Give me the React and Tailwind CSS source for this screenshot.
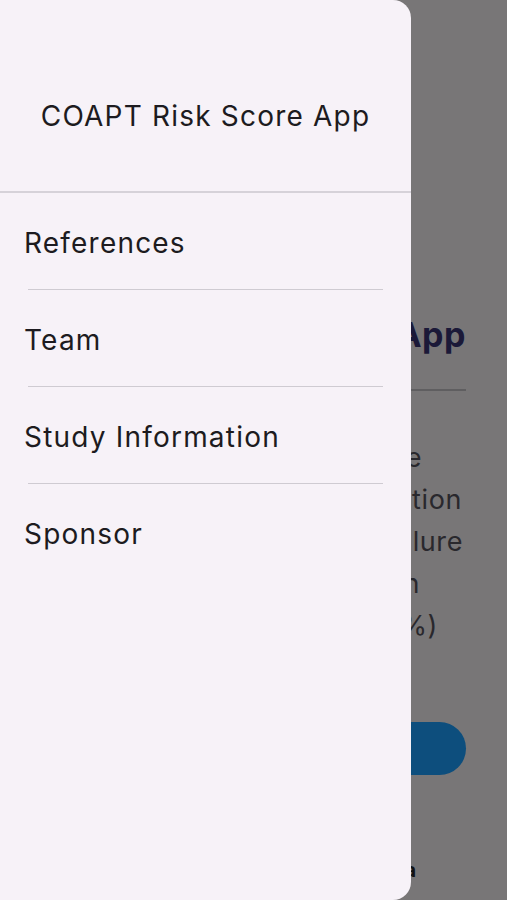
import React from 'react';

const menuItems = ['References', 'Team', 'Study Information', 'Sponsor'];

const bodyLines = [
  { text: 'Estimate the', mr: 'mr-[44px]' },
  { text: 'risk of the combination', mr: 'mr-[4px]' },
  { text: 'of death or heart failure', mr: 'mr-[3px]' },
  { text: 'hospitalization', mr: 'mr-[46px]' },
  { text: 'at 2 years (%)', mr: 'mr-[28px]' },
];

const App = () => {
  return (
    <div
      className="relative h-[900px] w-[507px] overflow-hidden bg-[#787677]"
      style={{ fontFamily: 'Inter, "Noto Sans", sans-serif' }}
    >
      {/* page behind the drawer, dimmed by the scrim */}
      <div className="flex flex-col items-end pr-[41px]">
        <h1 className="mt-[315px] text-[34px] font-bold leading-[40px] tracking-[0.5px] text-[#1b1938] whitespace-nowrap">
          COAPT Risk Score App
        </h1>
        <div className="mt-[34px] h-[2px] w-[440px] bg-[#5f5e60]" />
        <div className="mt-[46px] flex flex-col items-end text-[27px] leading-[42px] text-[#29282d] tracking-[0.6px]">
          {bodyLines.map((line) => (
            <span key={line.text} className={`whitespace-nowrap ${line.mr}`}>
              {line.text}
            </span>
          ))}
        </div>
        <button className="mt-[75px] h-[53px] w-[420px] rounded-full bg-[#0d4e7d]" />
        <span className="mt-[81px] mr-[50px] text-[20px] font-bold leading-[28px] text-[#111111]">
          Data
        </span>
      </div>

      {/* drawer */}
      <div className="absolute left-0 top-0 flex h-[900px] w-[411px] flex-col rounded-r-[18px] bg-[#f7f2f8]">
        <div className="flex h-[191px] items-center justify-center pt-[41px]">
          <span className="text-[28px] tracking-[1.2px] text-[#1d1b20]">COAPT Risk Score App</span>
        </div>
        <div className="h-[2px] bg-[#d6d2d9]" />
        {menuItems.map((item, i) => (
          <div key={item}>
            <div className="flex h-[96px] items-center pl-6 pt-[3px] text-[28px] tracking-[1.2px] text-[#1d1b20]">
              {item}
            </div>
            {i < menuItems.length - 1 && <div className="mx-[28px] h-px bg-[#cfcbd2]" />}
          </div>
        ))}
      </div>
    </div>
  );
};

export default App;
